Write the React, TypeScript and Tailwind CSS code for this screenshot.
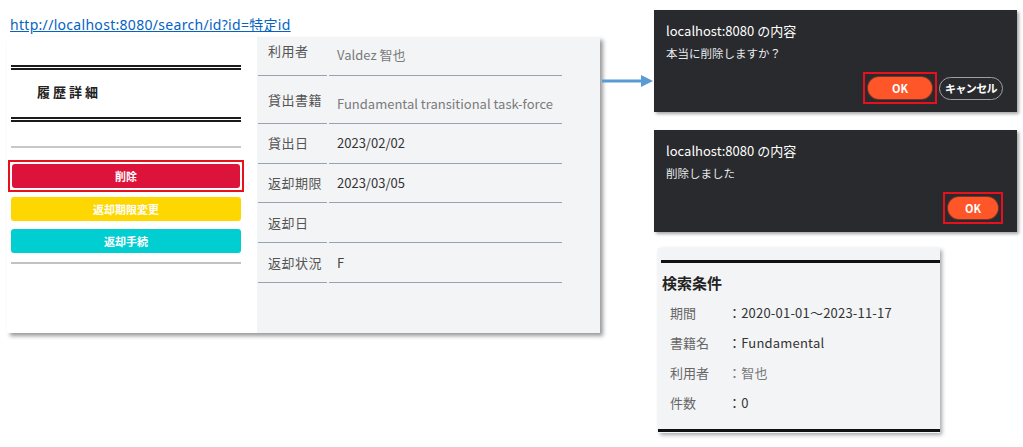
import React from 'react';

const JP = { fontFamily: '"Noto Sans CJK JP", "Noto Sans", sans-serif' };
const LINK = { fontFamily: '"Noto Sans", "Noto Sans CJK JP", sans-serif' };

type Row = { label: string; value: string; h: string; lp: string; vp: string; tone: string };

const ROWS: Row[] = [
  { label: '利用者', value: 'Valdez 智也', h: 'h-[39px]', lp: 'pt-[4px]', vp: 'pt-[8px]', tone: 'text-[#7a7a7a]' },
  { label: '貸出書籍', value: 'Fundamental transitional task-force', h: 'h-[48px]', lp: 'pt-[14px]', vp: 'pt-[18px]', tone: 'text-[#7a7a7a]' },
  { label: '貸出日', value: '2023/02/02', h: 'h-[40px]', lp: 'pt-[9px]', vp: 'pt-[9px]', tone: 'text-[#333]' },
  { label: '返却期限', value: '2023/03/05', h: 'h-[39px]', lp: 'pt-[9px]', vp: 'pt-[9px]', tone: 'text-[#333]' },
  { label: '返却日', value: '', h: 'h-[40px]', lp: 'pt-[10px]', vp: 'pt-[10px]', tone: 'text-[#333]' },
  { label: '返却状況', value: 'F', h: 'h-[40px]', lp: 'pt-[10px]', vp: 'pt-[10px]', tone: 'text-[#444]' },
];

const CONDITIONS = [
  { label: '期間', value: '2020-01-01～2023-11-17', tone: 'text-[#333]' },
  { label: '書籍名', value: 'Fundamental', tone: 'text-[#333]' },
  { label: '利用者', value: '智也', tone: 'text-[#777]' },
  { label: '件数', value: '0', tone: 'text-[#333]' },
];

// left half of the screen capture: menu with actions
const SideMenu = () => (
  <div className="w-[250px] bg-white pl-[4px] pr-[16px] pt-[28px]">
    <div className="border-t-[5px] border-double border-[#1a1a1a]" />
    <div className="h-[47px] flex items-center pl-[26px] pb-[3px] text-[13px] font-bold tracking-[3px] text-[#222]">履歴詳細</div>
    <div className="border-t-[5px] border-double border-[#1a1a1a]" />
    <div className="mt-[24px] h-[2px] bg-[#c8c8c8]" />
    <div className="mt-[12px] -mx-[3px] border-2 border-[#e8101c] p-[2px]">
      <button className="block w-full h-[24px] rounded-[3px] bg-[#dc143c] text-white text-[11px] font-bold">削除</button>
    </div>
    <button className="block mt-[5px] w-full h-[24px] rounded-[3px] bg-[#ffd700] text-white text-[11px] font-bold">返却期限変更</button>
    <button className="block mt-[8px] w-full h-[24px] rounded-[3px] bg-[#00ced1] text-white text-[11px] font-bold">返却手続</button>
    <div className="mt-[9px] h-[2px] bg-[#c2c2c2]" />
  </div>
);

const DetailTable = () => (
  <div className="flex-1 bg-[#f3f4f6] pl-[1px]">
    {ROWS.map((r) => (
      <div key={r.label} className={`flex gap-[2px] ${r.h} w-[304px] text-[13px] leading-[20px]`}>
        <div className={`w-[69px] border-b border-[#95a3b5] pl-[10px] text-[#555] tracking-[0.5px] ${r.lp}`}>{r.label}</div>
        <div className={`flex-1 border-b border-[#95a3b5] pl-[8px] whitespace-nowrap ${r.tone} ${r.vp}`}>{r.value}</div>
      </div>
    ))}
  </div>
);

const Dialog = ({ message, cancel }: { message: string; cancel?: boolean }) => (
  <div className="w-[363px] h-[102px] bg-[#292a2d] shadow-[2px_2px_3px_rgba(0,0,0,0.35)] pl-[12px] pr-[14px] pt-[12px] flex flex-col">
    <div className="text-[13px] leading-[18px] text-white">localhost:8080 の内容</div>
    <div className="mt-[5px] text-[11.5px] leading-[16px] text-[#e8eaed]">{message}</div>
    <div className="mt-auto mb-[8px] flex justify-end items-center gap-[2px]">
      <div className="border-2 border-[#e8101c] px-[3px] py-[3px]">
        <button className={`block ${cancel ? 'w-[64px]' : 'w-[50px]'} h-[22px] rounded-full bg-[#fe5628] ring-1 ring-[#7a3326] text-white text-[11px] font-bold`}>
          OK
        </button>
      </div>
      {cancel && (
        <button className="w-[64px] h-[23px] rounded-full border border-[#9aa0a6] text-white text-[11px] font-bold tracking-[-0.6px]">
          キャンセル
        </button>
      )}
    </div>
  </div>
);

const Arrow = () => (
  <svg width="52" height="14" viewBox="0 0 52 14">
    <rect x="0" y="5.5" width="41" height="3" fill="#5b9bd5" />
    <polygon points="39,1 51,7 39,13" fill="#5b9bd5" />
  </svg>
);

const SearchConditions = () => (
  <div className="w-[282px] h-[185px] bg-[#f3f4f6] shadow-[2px_2px_4px_rgba(0,0,0,0.35)] pt-[12px] flex flex-col">
    <div className="ml-[3px] h-[3px] bg-[#111]" />
    <div className="pl-[4px] mt-[10px] text-[15px] leading-[20px] font-bold text-[#222]">検索条件</div>
    <div className="mt-[10px] flex flex-col gap-[10px] text-[13px] leading-[20px]">
      {CONDITIONS.map((c) => (
        <div key={c.label} className="flex">
          <div className="w-[70px] pl-[12px] text-[#666]">{c.label}</div>
          <div className={`${c.tone} tracking-[0.2px]`}>：{c.value}</div>
        </div>
      ))}
    </div>
    <div className="mt-auto mb-[1px] h-[3px] bg-[#111]" />
  </div>
);

export default function App() {
  return (
    <div className="relative w-[1023px] h-[447px] bg-white overflow-hidden" style={JP}>
      <a className="absolute left-[10px] top-[15px] text-[14px] leading-[20px] tracking-[0.3px] text-[#0563c1] underline" style={LINK}>
        http://localhost:8080/search/id?id=特定id
      </a>

      <div className="absolute left-[7px] top-[37px] w-[593px] h-[296px] flex shadow-[3px_3px_4px_rgba(0,0,0,0.4)]">
        <SideMenu />
        <DetailTable />
      </div>

      <div className="absolute left-[602px] top-[74px]">
        <Arrow />
      </div>

      <div className="absolute left-[654px] top-[10px]">
        <Dialog message="本当に削除しますか？" cancel />
      </div>
      <div className="absolute left-[654px] top-[130px]">
        <Dialog message="削除しました" />
      </div>

      <div className="absolute left-[658px] top-[248px]">
        <SearchConditions />
      </div>
    </div>
  );
}
